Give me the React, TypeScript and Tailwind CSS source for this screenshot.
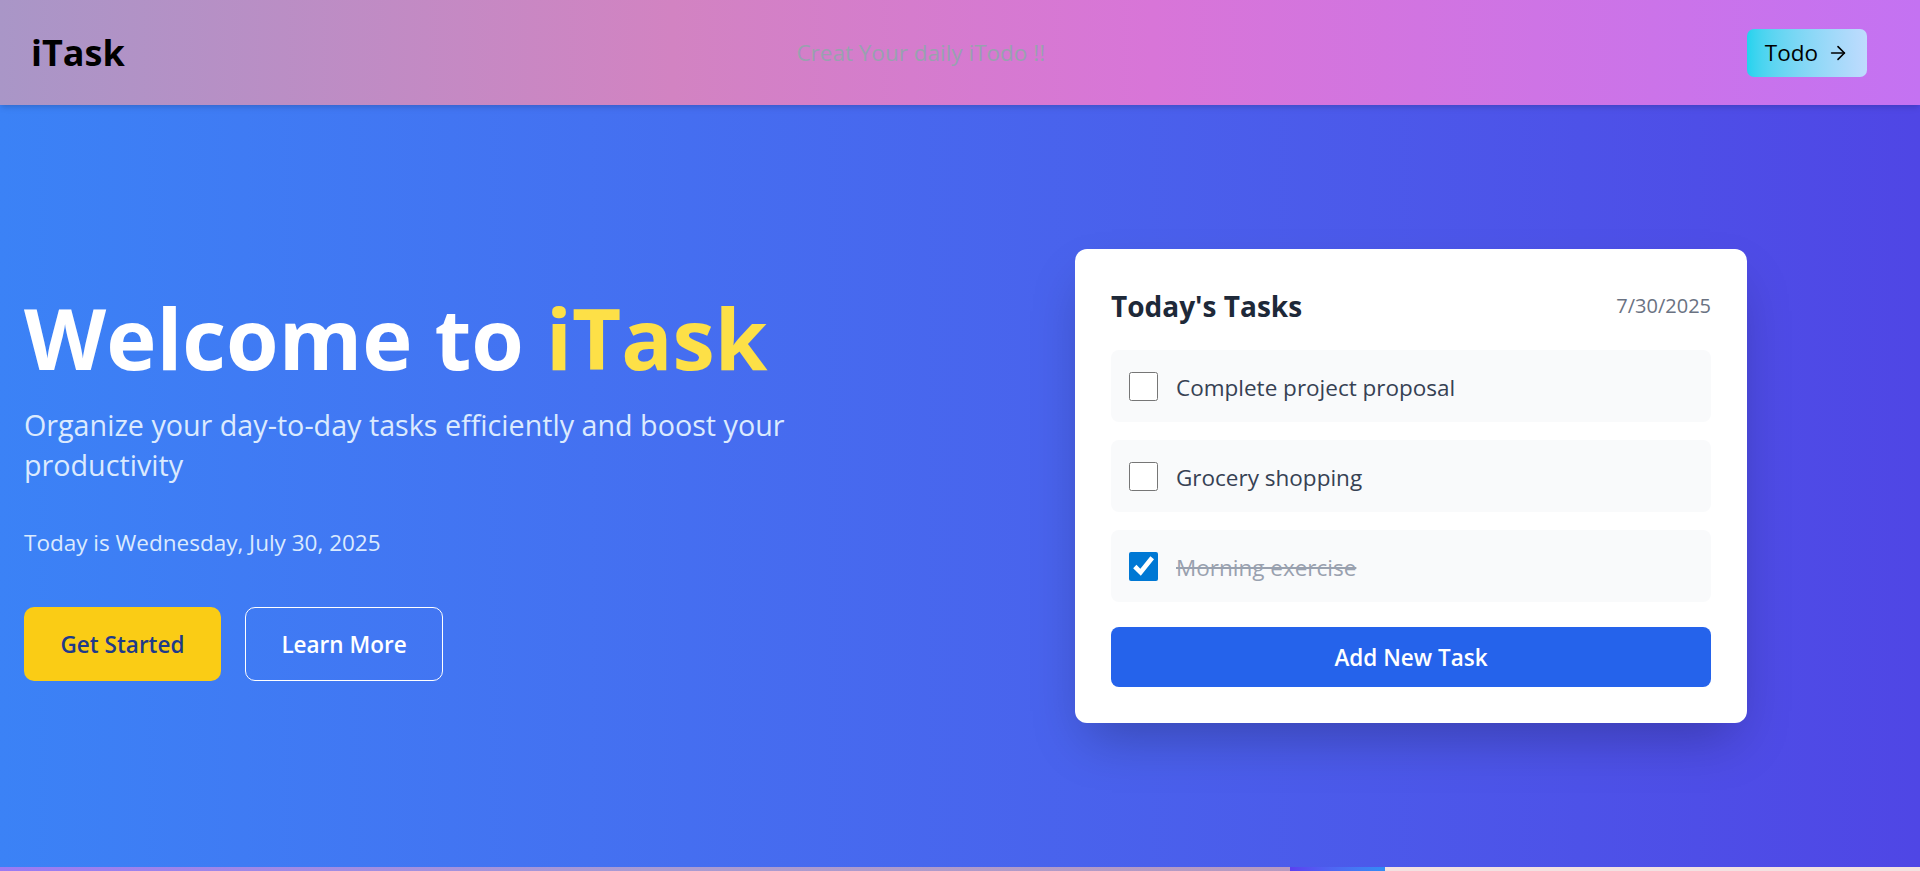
import { useState } from 'react';
import { ArrowRight } from 'lucide-react';

type Task = { id: number; text: string; done: boolean };

const initialTasks: Task[] = [
  { id: 1, text: 'Complete project proposal', done: false },
  { id: 2, text: 'Grocery shopping', done: false },
  { id: 3, text: 'Morning exercise', done: true },
];

export default function App() {
  const [tasks, setTasks] = useState<Task[]>(initialTasks);

  const toggle = (id: number) =>
    setTasks((prev) => prev.map((t) => (t.id === id ? { ...t, done: !t.done } : t)));

  return (
    <div className="h-screen overflow-y-scroll font-['Open_Sans',sans-serif]">
      {/* Top bar */}
      <header className="relative z-10 flex h-[105px] items-center justify-between bg-[linear-gradient(90deg,#a996c7_0%,#d283c2_35%,#d875d8_60%,#c472f2_100%)] pl-[31px] pr-[53px] shadow-md">
        <div className="text-[36px] font-bold leading-none text-black">iTask</div>
        <p className="mr-[30px] text-[22.5px] text-gray-400">Creat Your daily iTodo !!</p>
        <button
          type="button"
          className="flex h-[48px] items-center gap-[9px] rounded-[7px] bg-gradient-to-r from-[#22d3ee] to-[#bfdbfe] px-[18px] text-[22.5px] text-black"
        >
          Todo
          <ArrowRight size={22} strokeWidth={1.75} />
        </button>
      </header>

      {/* Hero */}
      <section className="flex h-[762px] items-center justify-between bg-gradient-to-r from-[#3b82f6] to-[#4f46e5] pl-[24px] pr-[173px]">
        <div>
          <h1 className="text-[85px] font-bold leading-[90px] text-white">
            Welcome to <span className="text-[#fde047]">iTask</span>
          </h1>
          <p className="mt-[23px] max-w-[800px] text-[28.7px] leading-[40px] text-[#dbeafe]">
            Organize your day-to-day tasks efficiently and boost your productivity
          </p>
          <p className="mt-[40px] text-[22.5px] leading-[35px] text-[#dbeafe]">
            Today is Wednesday, July 30, 2025
          </p>
          <div className="mt-[47px] flex gap-[24px]">
            <button
              type="button"
              className="h-[74px] w-[197px] rounded-[10px] bg-[#facc15] pt-[3px] text-[22.5px] font-semibold text-[#1e3a8a]"
            >
              Get Started
            </button>
            <button
              type="button"
              className="h-[74px] w-[198px] rounded-[10px] border border-white pt-[3px] text-[22.5px] font-semibold text-white"
            >
              Learn More
            </button>
          </div>
        </div>

        {/* Task card */}
        <div className="w-[672px] rounded-[12px] bg-white p-[36px] shadow-2xl">
          <div className="mb-[25px] flex items-center justify-between pt-[2px]">
            <h2 className="text-[28px] font-bold leading-[38px] text-gray-800">Today's Tasks</h2>
            <span className="text-[20px] text-gray-500">7/30/2025</span>
          </div>
          <div className="flex flex-col gap-[18px]">
            {tasks.map((task) => (
              <label
                key={task.id}
                className="flex h-[72px] cursor-pointer items-center gap-[18px] rounded-[8px] bg-gray-50 px-[18px]"
              >
                <input
                  type="checkbox"
                  checked={task.done}
                  onChange={() => toggle(task.id)}
                  className="h-[29px] w-[29px] accent-[#0078d4]"
                />
                <span
                  className={
                    task.done
                      ? 'pt-[3px] text-[22.5px] text-gray-400 line-through'
                      : 'pt-[3px] text-[22.5px] text-gray-700'
                  }
                >
                  {task.text}
                </span>
              </label>
            ))}
          </div>
          <button
            type="button"
            className="mt-[25px] h-[60px] w-full rounded-[8px] bg-[#2563eb] pt-[2px] text-[22.5px] font-semibold text-white"
          >
            Add New Task
          </button>
        </div>
      </section>

      {/* Next section */}
      <section className="flex h-[320px]">
        <div className="w-[1290px] bg-gradient-to-r from-[#9b7af3] via-[#a99bd2] to-[#b89ac0]" />
        <div className="w-[95px] bg-gradient-to-r from-[#5b3ff0] to-[#2f8df5]" />
        <div className="flex-1 bg-[#f3e1e1]" />
      </section>
    </div>
  );
}
